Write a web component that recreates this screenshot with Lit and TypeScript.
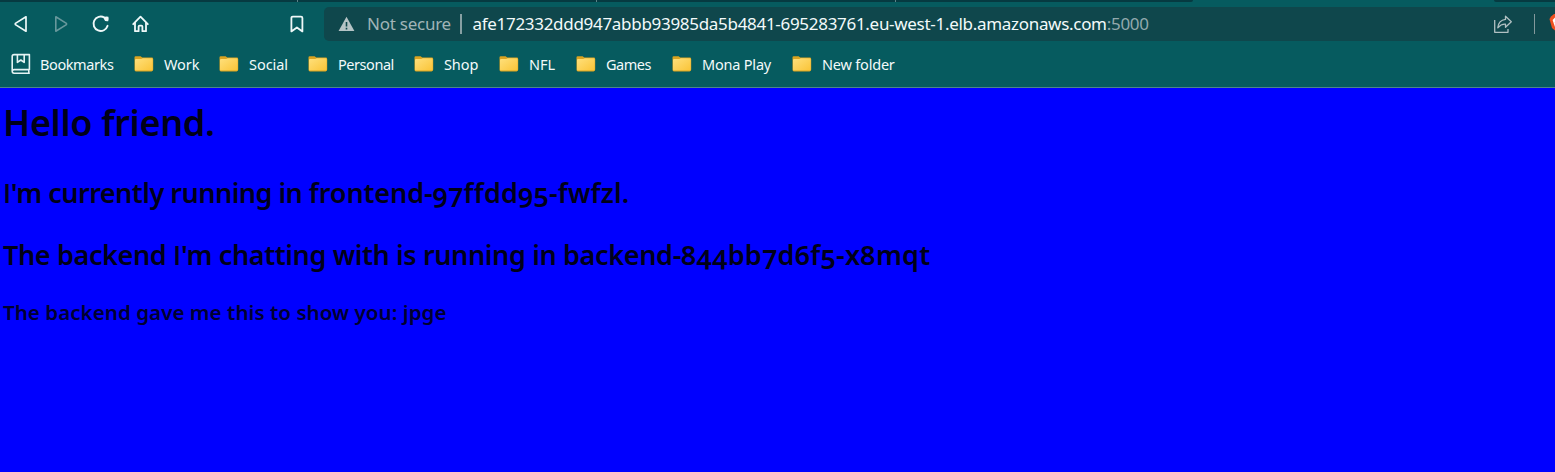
import { LitElement, html, css } from "lit";
import { customElement } from "lit/decorators.js";

const FOLDERS: { name: string; width: number; spacing: number }[] = [
  { name: "Work", width: 85, spacing: -0.1 },
  { name: "Social", width: 89, spacing: -0.05 },
  { name: "Personal", width: 106, spacing: -0.45 },
  { name: "Shop", width: 85, spacing: -0.1 },
  { name: "NFL", width: 77, spacing: 0 },
  { name: "Games", width: 96, spacing: -0.5 },
  { name: "Mona Play", width: 120, spacing: -0.2 },
  { name: "New folder", width: 110, spacing: -0.2 },
];

@customElement("folder-icon")
class FolderIcon extends LitElement {
  static styles = css`
    :host { display: block; width: 20px; height: 16px; }
    svg { display: block; }
  `;
  render() {
    return html`<svg width="20" height="16" viewBox="0 0 20 16">
      <defs>
        <linearGradient id="face" x1="0" y1="0" x2="1" y2="1">
          <stop offset="0" stop-color="#ffe07c" />
          <stop offset="1" stop-color="#fac437" />
        </linearGradient>
      </defs>
      <path d="M.5 1.5Q.5 .3 1.7 .3H6.6L8.3 1.6H17.8Q19.2 1.6 19.2 3V13.6Q19.2 15.4 17.6 15.4H2Q.5 15.4 .5 13.8Z" fill="#d9a321" />
      <path d="M1 4Q1 3 2 3H7.2L8.8 2.2H17.6Q18.7 2.2 18.7 3.4V13.4Q18.7 14.6 17.5 14.6H2.2Q1 14.6 1 13.4Z" fill="url(#face)" />
    </svg>`;
  }
}

@customElement("app-root")
class AppRoot extends LitElement {
  static styles = css`
    :host {
      display: flex;
      flex-direction: column;
      height: 472px;
      overflow: hidden;
      background: #0000ff;
      font-family: "Noto Sans", "Open Sans", sans-serif;
    }
    .chrome {
      box-sizing: border-box;
      height: 88px;
      background: #065b5f;
      border-bottom: 1px solid #4d858b;
      color: #f3fafa;
    }
    .tabs { display: flex; justify-content: space-between; height: 2px; }
    .inactive { display: flex; width: 1193px; overflow: hidden; background: #063a41; border-bottom-right-radius: 2px; }
    .tab { box-sizing: border-box; flex: none; width: 299px; border-right: 1px solid #5d8388; }
    .tab:first-child { width: 298px; }
    .tab:last-child { border: 0; }
    .after { width: 61px; background: #063a41; border-bottom-left-radius: 2px; }
    .toolbar { display: flex; height: 34px; padding-top: 5px; }
    .nav { display: flex; align-items: center; width: 324px; flex: none; }
    .nav svg { display: block; flex: none; }
    .back { margin-left: 10px; }
    .gap { margin-left: 18px; }
    .mark { margin-left: 134px; }
    .address {
      display: flex;
      align-items: center;
      flex: 1;
      min-width: 0;
      overflow: hidden;
      background: #0f474c;
      border-radius: 5px 0 0 5px;
      font-size: 17px;
      line-height: 34px;
      white-space: nowrap;
    }
    .warn { margin-left: 14px; flex: none; }
    .insecure { width: 93px; margin-left: 12px; color: #a1b4b7; letter-spacing: -0.25px; flex: none; }
    .bar { width: 1.5px; height: 20px; background: #87a0a3; flex: none; }
    .url { margin-left: 11px; width: 1020px; flex: none; letter-spacing: -0.3px; }
    .port { color: #93a9ac; }
    .share { flex: none; }
    .rule { width: 1px; height: 20px; margin-left: 21px; background: #83999c; flex: none; }
    .shield { margin-left: 14px; flex: none; }
    .bookmarks { display: flex; align-items: center; height: 46px; font-size: 14.5px; line-height: 20px; white-space: nowrap; }
    .all { display: flex; align-items: center; width: 123px; padding-left: 11px; gap: 9px; letter-spacing: -0.4px; }
    .item { display: flex; align-items: center; gap: 10px; flex: none; }
    .page { padding-left: 3px; color: #000018; font-weight: 600; font-variant-numeric: oldstyle-nums; white-space: nowrap; }
    h1, h2, h3 { margin: 0; font-weight: 600; }
    h1 { height: 70px; font-size: 36px; line-height: 70px; letter-spacing: -0.33px; }
    .running { height: 70px; font-size: 27px; line-height: 70px; letter-spacing: -0.5px; }
    .running .host { letter-spacing: -0.1px; }
    .running .id { letter-spacing: 0.15px; }
    .chatting { height: 54px; font-size: 27px; line-height: 54px; letter-spacing: -0.37px; }
    .chatting .host { letter-spacing: -0.33px; }
    .chatting .id { letter-spacing: 0.22px; }
    .plain { font-family: "Open Sans", sans-serif; line-height: 1; }
    h3 { height: 60px; font-size: 20.5px; line-height: 60px; letter-spacing: 0.06px; color: #000030; }
  `;

  render() {
    return html`
      <div class="chrome">
        <div class="tabs">
          <div class="inactive"><div class="tab"></div><div class="tab"></div><div class="tab"></div><div class="tab"></div></div>
          <div class="after"></div>
        </div>
        <div class="toolbar">
          <div class="nav">
            <svg class="back" width="22" height="22" viewBox="0 0 22 22" fill="none" stroke="#eef8f8" stroke-width="1.7" stroke-linejoin="round"><path d="M16 3.8V18.2L5.4 11.6Q5 11 5.4 10.4Z" /></svg>
            <svg class="gap" width="22" height="22" viewBox="0 0 22 22" fill="none" stroke="#68989c" stroke-width="1.6" stroke-linejoin="round"><path d="M5.8 3.8V18.2L16.4 11.6Q16.8 11 16.4 10.4Z" /></svg>
            <svg class="gap" width="22" height="22" viewBox="0 0 22 22" fill="none" stroke="#eef8f8" stroke-width="1.9" stroke-linecap="round"><path d="M14.4 4.6A7.2 7.2 0 1 0 17.6 12.8" /><path d="M13.6 4Q16 3.2 18.4 3.8Q19 6 18.2 8.2Q14.6 8.6 14.2 6.4Z" fill="#eef8f8" stroke="none" /></svg>
            <svg class="gap" width="22" height="22" viewBox="0 0 22 22" fill="none" stroke="#eef8f8" stroke-width="1.8" stroke-linejoin="round" stroke-linecap="round"><path d="M3.2 11.2L10.5 3.6L17.8 11.2" /><path d="M5 10V18.2H8.6V13.6Q8.6 12.6 9.6 12.6H11.4Q12.4 12.6 12.4 13.6V18.2H16V10" /></svg>
            <svg class="mark" width="22" height="22" viewBox="0 0 22 22" fill="none" stroke="#eef8f8" stroke-width="1.8" stroke-linejoin="round"><path d="M5.4 5Q5.4 3.6 6.8 3.6H15Q16.4 3.6 16.4 5V18.4L10.9 14.4L5.4 18.4Z" /></svg>
          </div>
          <div class="address">
            <svg class="warn" width="17" height="16" viewBox="0 0 17 16"><path d="M8.5 .8L16.4 15H.6Z" fill="#b5c4c6" /><path d="M8.5 6V10.4M8.5 11.8V13.4" stroke="#0f474c" stroke-width="1.6" /></svg>
            <span class="insecure">Not secure</span>
            <span class="bar"></span>
            <span class="url">afe172332ddd947abbb93985da5b4841-695283761.eu-west-1.elb.amazonaws.com<span class="port">:5000</span></span>
            <svg class="share" width="20" height="20" viewBox="0 0 20 20" fill="none" stroke="#b1c0c2" stroke-width="1.3" stroke-linejoin="round"><path d="M1.7 6V18.3H15V15" /><path d="M12.5 2.2L18.3 7.8L12.5 13.3V10.2Q8.2 9.8 4.8 13.8Q5.5 6.2 12.5 5.4Z" /></svg>
            <span class="rule"></span>
            <svg class="shield" width="20" height="22" viewBox="0 0 20 22"><path d="M2 3.5L5 1H15L18 3.5L17 15L10 21L3 15L.5 6Z" fill="#f0501f" /><path d="M3.6 7L6 4.5H14L16.4 7L14 14L10 17L6 14Z" fill="#fff" /><path d="M5.5 9L8 10.5L7.4 12Z" fill="#f0501f" /></svg>
          </div>
        </div>
        <div class="bookmarks">
          <div class="all">
            <svg width="20" height="22" viewBox="0 0 20 22" fill="none" stroke="#e4f3f3" stroke-width="1.6" stroke-linejoin="round"><path d="M18.4 17V1.6H3Q1.2 1.6 1.2 3.4V18Q1.2 20.2 3 20.2H18.8M1.4 18Q1.6 16.6 3 16.6H18.6M17.8 17V20" /><path d="M6.4 2V9.4L9.8 7L13.2 9.4V2" /></svg>
            <span>Bookmarks</span>
          </div>
          ${FOLDERS.map((f) => html`<div class="item" style="width:${f.width}px;letter-spacing:${f.spacing}px"><folder-icon></folder-icon><span>${f.name}</span></div>`)}
        </div>
      </div>
      <main class="page">
        <h1>Hello friend.</h1>
        <h2 class="running"><span class="plain">I</span>'m currently running in <span class="host">frontend-</span><span class="id">97ffdd95-fwfzl.</span></h2>
        <h2 class="chatting">The backend <span class="plain">I</span>'m chatting with is running in <span class="host">backend-</span><span class="id">844bb7d6f5-x8mqt</span></h2>
        <h3>The backend gave me this to show you: jpge</h3>
      </main>
    `;
  }
}
